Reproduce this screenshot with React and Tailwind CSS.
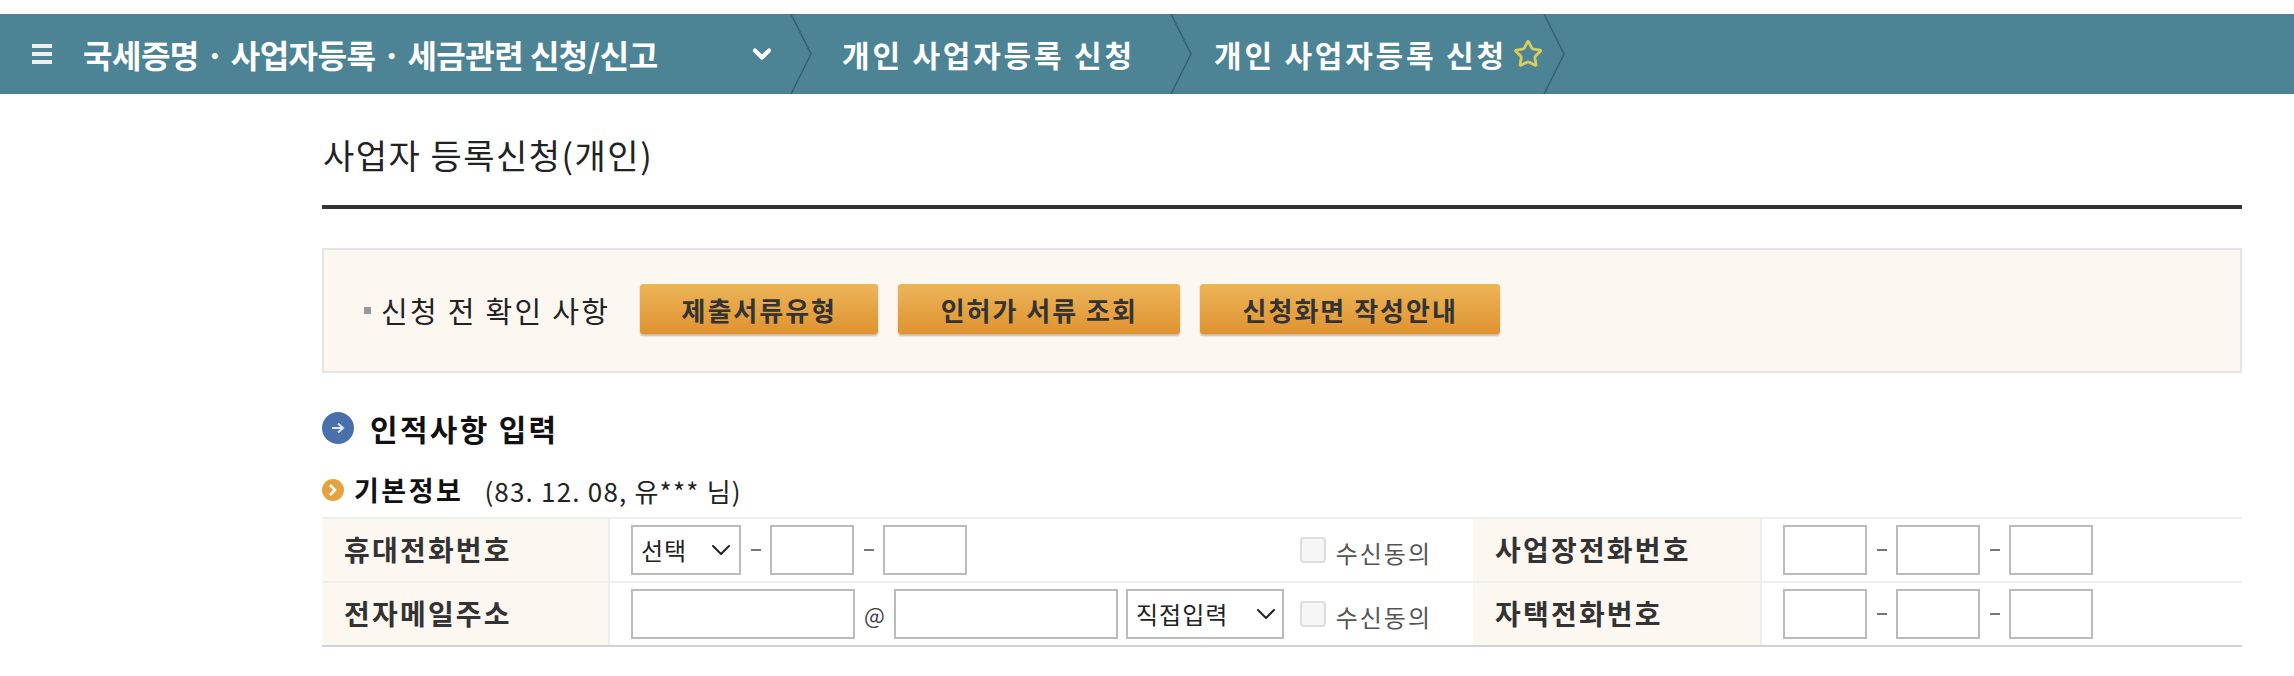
import React from 'react';
import { ChevronDown, Star } from 'lucide-react';

const Crumb = ({ width, children }) => (
    <div className="flex items-center h-full shrink-0" style={{ width }}>{children}</div>
);

// dark chevron between the breadcrumb segments
const Sep = () => (
    <svg className="shrink-0" width="24" height="80" viewBox="0 0 24 80" fill="none">
        <path d="M1 0 L21 40 L1 80" stroke="#2f6277" strokeWidth="1.5" />
    </svg>
);

const Dash = () => (
    <span className="flex justify-center items-center w-[29px]">
        <span className="w-[10px] h-[2px] bg-[#777]"></span>
    </span>
);

const Box = ({ className = 'w-[84px]' }) => (
    <input type="text" className={`${className} h-[50px] bg-white border-2 border-[#bbb]`} />
);

const Phone = () => (
    <div className="flex items-center">
        <Box />
        <Dash />
        <Box />
        <Dash />
        <Box />
    </div>
);

const Select = ({ width, arrow, label }) => (
    <div className="relative shrink-0" style={{ width }}>
        <select className="appearance-none w-full h-[50px] pl-[8px] bg-white border-2 border-[#bbb] text-[24px] tracking-[1px] text-[#222]">
            <option>{label}</option>
        </select>
        <ChevronDown className={`absolute top-[9px] ${arrow} w-[32px] h-[32px] text-[#222] pointer-events-none`} strokeWidth={1.5} />
    </div>
);

const Label = ({ children }) => (
    <div className="flex items-center pl-[22px] pb-[2px] bg-[#fdf7f1] text-[28px] font-semibold tracking-[2.2px] text-[#333] border-r-2 border-[#eee]">
        {children}
    </div>
);

const Agree = () => (
    <label className="flex items-center text-[24px] tracking-[2px] text-[#555]">
        <input type="checkbox" disabled className="appearance-none w-[26px] h-[26px] mr-[10px] rounded-[4px] border-2 border-[#ddd] bg-[#f6f6f6]" />
        <span className="mt-[5px]">수신동의</span>
    </label>
);

const OrangeButton = ({ width, children }) => (
    <button className="h-[50px] rounded-[3px] bg-gradient-to-b from-[#ebb558] to-[#e0922f] text-[26px] font-bold tracking-[2px] text-[#333] shadow-[0_2px_2px_#c9b9a3]" style={{ width }}>
        {children}
    </button>
);

const App = () => {
    return (
        <div className="w-[2294px] h-[676px] overflow-hidden bg-white pt-[14px] font-['Noto_Sans_CJK_KR','Noto_Sans',sans-serif]">
            {/* Breadcrumb */}
            <div className="flex items-center h-[80px] bg-[#4d8495] text-white font-bold">
                <Crumb width={790}>
                    <div className="flex flex-col gap-[4px] ml-[32px] mr-[31px]">
                        <span className="w-[20px] h-[4px] bg-[#eee]"></span>
                        <span className="w-[20px] h-[4px] bg-[#eee]"></span>
                        <span className="w-[20px] h-[4px] bg-[#eee]"></span>
                    </div>
                    <span className="text-[32px] tracking-[-0.5px] whitespace-nowrap">국세증명 · 사업자등록 · 세금관련 신청/신고</span>
                    <ChevronDown className="ml-auto mr-[14px] w-[28px] h-[28px]" strokeWidth={3.5} />
                </Crumb>
                <Sep />
                <Crumb width={356}>
                    <span className="ml-[28px] text-[30px] tracking-[2.8px] whitespace-nowrap">개인 사업자등록 신청</span>
                </Crumb>
                <Sep />
                <Crumb width={349}>
                    <span className="ml-[20px] text-[30px] tracking-[2.8px] whitespace-nowrap">개인 사업자등록 신청</span>
                    <Star className="ml-[6px] w-[34px] h-[34px] text-[#d8cc5c]" strokeWidth={2.25} />
                </Crumb>
                <Sep />
            </div>

            <div className="ml-[322px] w-[1920px]">
                {/* Title */}
                <div className="h-[115px] pt-[38px] border-b-[4px] border-[#333]">
                    <h1 className="ml-[1px] text-[34px] tracking-[1.5px] leading-[46px] text-[#222]">사업자 등록신청(개인)</h1>
                </div>

                {/* Notice */}
                <div className="flex items-center gap-[30px] h-[125px] mt-[39px] pl-[40px] bg-[#fdf7f1] border-2 border-[#e5e5e5]">
                    <div className="flex items-center text-[29px] tracking-[2.3px] text-[#222]">
                        <span className="w-[7px] h-[7px] bg-[#999] mr-[10px]"></span>
                        신청 전 확인 사항
                    </div>
                    <div className="flex gap-[20px] mb-[3px]">
                        <OrangeButton width={238}>제출서류유형</OrangeButton>
                        <OrangeButton width={282}>인허가 서류 조회</OrangeButton>
                        <OrangeButton width={300}>신청화면 작성안내</OrangeButton>
                    </div>
                </div>

                {/* Section */}
                <div className="flex items-center mt-[33px] h-[44px]">
                    <svg width="32" height="32" viewBox="0 0 32 32" className="shrink-0">
                        <circle cx="16" cy="16" r="16" fill="#4a70ab" />
                        <path d="M10 16h10M16 11.5l5 4.5-5 4.5" stroke="#dfe8f5" strokeWidth="2" fill="none" />
                    </svg>
                    <h2 className="ml-[16px] text-[30px] font-bold tracking-[2.3px] text-[#111]">인적사항 입력</h2>
                </div>

                <div className="flex items-center mt-[18px] h-[44px]">
                    <svg width="22" height="22" viewBox="0 0 22 22" className="shrink-0">
                        <circle cx="11" cy="11" r="11" fill="#e5a33f" />
                        <path d="M8 6l5 5-5 5" stroke="#fff" strokeWidth="2.5" fill="none" />
                    </svg>
                    <h3 className="ml-[10px] text-[27px] font-bold tracking-[2.5px] text-[#111]">기본정보</h3>
                    <span className="ml-[21px] text-[26px] text-[#222] tracking-[1.2px]">(83. 12. 08, 유*** 님)</span>
                </div>

                {/* Form table */}
                <div className="grid grid-cols-[288px_863px_289px_480px] grid-rows-[64px_62px] mt-[5px] border-t-2 border-b-2 border-t-[#eee] border-b-[#d2d2d2]">
                    <div className="grid border-b-2 border-[#eee]"><Label>휴대전화번호</Label></div>
                    <div className="flex items-center justify-between pl-[21px] pr-[41px] border-b-2 border-[#eee]">
                        <div className="flex items-center">
                            <Select width={110} arrow="right-[4px]" label="선택" />
                            <Dash />
                            <Box />
                            <Dash />
                            <Box />
                        </div>
                        <Agree />
                    </div>
                    <div className="grid border-b-2 border-[#eee]"><Label>사업장전화번호</Label></div>
                    <div className="flex items-center pl-[21px] border-b-2 border-[#eee]">
                        <Phone />
                    </div>

                    <Label>전자메일주소</Label>
                    <div className="flex items-center pl-[21px] pr-[41px]">
                        <Box className="w-[224px]" />
                        <span className="w-[39px] text-center text-[22px] text-[#444]">@</span>
                        <Box className="w-[224px]" />
                        <div className="ml-[8px]">
                            <Select width={158} arrow="right-[2px]" label="직접입력" />
                        </div>
                        <div className="ml-auto">
                            <Agree />
                        </div>
                    </div>
                    <Label>자택전화번호</Label>
                    <div className="flex items-center pl-[21px]">
                        <Phone />
                    </div>
                </div>
            </div>
        </div>
    );
};

export default App;
